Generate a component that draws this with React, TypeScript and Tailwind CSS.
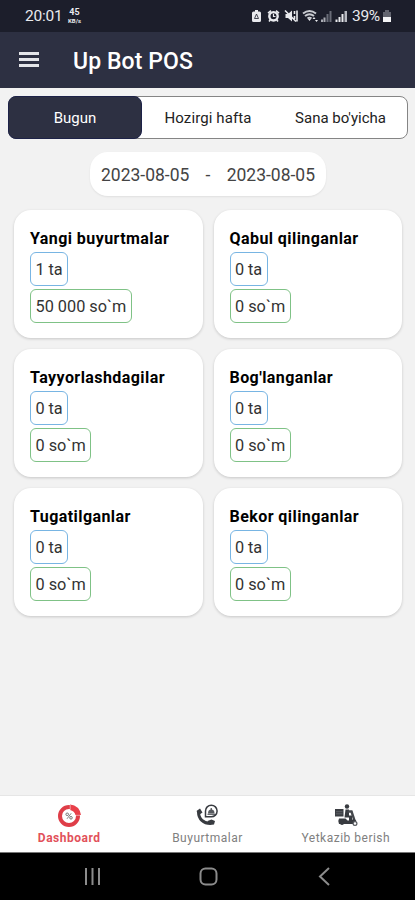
const stats = [
  { title: "Yangi buyurtmalar", count: "1 ta", sum: "50 000 so`m" },
  { title: "Qabul qilinganlar", count: "0 ta", sum: "0 so`m" },
  { title: "Tayyorlashdagilar", count: "0 ta", sum: "0 so`m" },
  { title: "Bog'langanlar", count: "0 ta", sum: "0 so`m" },
  { title: "Tugatilganlar", count: "0 ta", sum: "0 so`m" },
  { title: "Bekor qilinganlar", count: "0 ta", sum: "0 so`m" },
];

function StatusIcons() {
  return (
    <svg width="98" height="16" viewBox="0 0 98 16" fill="#e9eaee">
      {/* battery saver */}
      <path d="M4 2h3v1.5h1.5q1.5 0 1.5 1.5v7.5q0 1.500-1.500 1.500H2.500Q1 14 1 12.500V5q0-1.500 1.500-1.500H4z" />
      <path d="M3.500 10.500 5.500 6l2 4.500z" fill="none" stroke="#1c1e2b" strokeWidth=".8" />
      {/* alarm */}
      <circle cx="22.500" cy="8.300" r="4.200" fill="none" stroke="#e9eaee" strokeWidth="2.400" />
      <path d="m16.500 4.500 3-2.500 1 1.300-3 2.500zM28.500 4.500l-3-2.500-1 1.300 3 2.500zM18.500 11l1.500 1.500-1.500 1.500-1-1zM26.500 11 25 12.500l1.500 1.500 1-1z" />
      <path d="M22.500 5.800v2.700h2" fill="none" stroke="#e9eaee" strokeWidth="1.200" />
      {/* muted */}
      <path d="M34.500 6h2.500l4-3.500v11L37 10h-2.500z" />
      <path d="m34 2.500 11 11M43.500 3v3M43.500 8v3M46 2.500v11" stroke="#e9eaee" strokeWidth="1.600" fill="none" />
      {/* wifi */}
      <path d="M52 5.500q6.500-5 13 0M54 8q4.500-3.500 9 0M56.500 10.500q2-1.500 4 0" stroke="#c9cbd1" strokeWidth="2" fill="none" />
      <path d="m57 11 3 0-1.500 2zM61.500 11l1.500-2 1.500 2zM64 12h3l-1.500 2z" />
      {/* signal bars */}
      <path d="M70 11.500h2V14H70zM72.500 9.500h2V14h-2z" fill="#a9abb3" />
      <path d="M75.500 6h2v8h-2zM78.500 3h2v11h-2z" fill="#696c78" />
      <path d="M84.500 11.500h2V14h-2zM87.500 9h2v5h-2zM90.500 6h2v8h-2z" />
      <path d="M93.500 3H96v11h-2.500z" fill="#b7b9c1" />
    </svg>
  );
}

function DashboardIcon() {
  return (
    <svg width="24" height="24" viewBox="0 0 24 24" fill="none">
      <circle cx="12" cy="13" r="9" stroke="#df3e48" strokeWidth="4" />
      <path d="M13 1.500q9.500 1 11 10.500h-5.500q-1-4-5.500-5z" fill="#e9404a" />
      <path d="M13.200 2v5.500M18 12.300h5.500" stroke="#fff" strokeWidth=".5" />
      <circle cx="10.200" cy="11.300" r="1.300" stroke="#777" />
      <circle cx="14" cy="14.800" r="1.300" stroke="#777" />
      <path d="m14.200 10.300-4.200 5.500" stroke="#777" strokeWidth=".9" />
    </svg>
  );
}

function OrdersIcon() {
  return (
    <svg width="24" height="24" viewBox="0 0 24 24" fill="none">
      <path d="M3.500 9c0 7 5 11.500 12 11.500" stroke="#383b40" strokeWidth="3" />
      <path d="m1.500 8 3.500-2.500 2.500 4-3.500 2.500zM12.500 18l4-1.500 3.500 1.500-1 3.500-4 .500z" fill="#383b40" />
      <path d="M10.500 13.500V8a5.800 5.800 0 1 1 5.800 5.800H10.500z" stroke="#383b40" strokeWidth="1.500" />
      <path d="M13 10.500q0-4 3.300-4t3.200 4z" fill="#55585d" />
      <path d="M12.500 11.300h7.500M16.200 5v2" stroke="#383b40" strokeWidth="1.100" />
    </svg>
  );
}

function DeliveryIcon() {
  return (
    <svg width="24" height="24" viewBox="0 0 24 24" fill="none">
      <path d="M1 6h8.500v7.500H1z" fill="#3b3e43" />
      <path d="M2 8.700h6.500M2 10.800h6.500" stroke="#74777c" strokeWidth=".6" />
      <circle cx="13" cy="3.500" r="2.200" fill="#383b40" />
      <path d="M11.500 6.500h3.500v6h3v6h-3v-4H10.500z" fill="#383b40" />
      <path d="M13.500 8.500h5M17.500 8.500l3.300 10" stroke="#45484d" strokeWidth="2.400" />
      <path d="M5 15.500h6.500l2 2h4l2-2 3 2.500-2.500 3H5q-1.500-3 0-5.500z" fill="#383b40" />
      <circle cx="8" cy="20" r="2" fill="#383b40" />
      <circle cx="21" cy="20.500" r="1.900" fill="#fff" stroke="#55585d" strokeWidth="1.200" />
    </svg>
  );
}

export default function App() {
  return (
    <div className="flex h-[900px] w-[415px] flex-col overflow-hidden bg-[#f2f2f2] font-['Roboto',sans-serif] whitespace-nowrap text-[#222]">
      <div className="flex h-8 shrink-0 items-center bg-[#1c1e2b] pl-[25px] text-[#e9eaee]">
        <span className="w-[42px] pt-[2px] text-[15.500px] tracking-[-0.2px]">20:01</span>
        <span className="flex w-[15px] flex-col items-center text-[9px] leading-[9px] font-bold">
          <span>45</span>
          <span className="text-[6px] leading-[7px]">KB/s</span>
        </span>
        <div className="ml-[169px] w-[101px]">
          <StatusIcons />
        </div>
        <span className="w-[30px] pt-[2px] text-[15.500px] tracking-[-0.3px]">39%</span>
        <svg width="10" height="14" viewBox="0 0 10 14">
          <path d="M3 1h4v2h2v5H1V3h2z" fill="#62646f" />
          <path d="M1 8h8v5H1z" fill="#f4f4f6" />
        </svg>
      </div>

      <header className="flex h-14 shrink-0 items-center bg-[#2d3042] pl-[19px]">
        <div className="flex w-[20px] flex-col gap-[3px] pb-[2px]">
          <span className="h-[3px] bg-[#e4e5e9]" />
          <span className="h-[3px] bg-[#e4e5e9]" />
          <span className="h-[3px] bg-[#e4e5e9]" />
        </div>
        <h1 className="ml-[34px] pt-[4px] text-[23px] font-medium tracking-[0.1px] text-white">Up Bot POS</h1>
      </header>

      <main className="flex flex-1 flex-col pt-2">
        <div className="ml-[8px] flex h-[43px] w-[400px] rounded-[8px] border border-[#858585] bg-white text-[15px]">
          <div className="-my-px -ml-px flex w-[134px] items-center justify-center rounded-[8px] border border-[#1d2248] bg-[#2d3042] pt-px text-white">
            Bugun
          </div>
          <div className="flex w-[132px] items-center justify-center pt-[2px] tracking-[0.1px]">Hozirgi hafta</div>
          <div className="flex w-[133px] items-center justify-center pt-[2px]">Sana bo'yicha</div>
        </div>

        <div className="mt-[13px] ml-[90px] flex h-[44px] w-[236px] items-center justify-between rounded-[18px] bg-white px-[11px] pt-[2px] text-[17.500px] text-[#444] shadow-[0_1px_2px_rgba(0,0,0,0.08)]">
          <span>2023-08-05</span>
          <span>-</span>
          <span>2023-08-05</span>
        </div>

        <div className="mt-[14px] ml-[14px] grid w-[388px] grid-cols-2 gap-x-[11px] gap-y-[11.500px]">
          {stats.map((s) => (
            <section
              key={s.title}
              className="flex h-[127.500px] flex-col items-start rounded-[17px] bg-white pt-[17px] pl-[16px] shadow-[0_1px_3px_rgba(0,0,0,0.18)]"
            >
              <h2 className="text-[16px] leading-[24px] font-bold tracking-[0.430px] text-black">{s.title}</h2>
              <span className="mt-px flex h-[34px] items-center rounded-[6px] border border-[#78b5e3] px-[4.500px] pt-[3px] text-[16.300px] tracking-[-0.050px] text-[#333]">
                {s.count}
              </span>
              <span className="mt-[3px] flex h-[34px] items-center rounded-[6px] border border-[#7fc286] px-[4.500px] pt-[3px] text-[16.300px] text-[#333]">
                {s.sum}
              </span>
            </section>
          ))}
        </div>
      </main>

      <nav className="grid h-[57px] shrink-0 grid-cols-3 border-t border-[#e6e6e6] bg-white text-[12px] text-[#808080]">
        <div className="flex flex-col items-center pt-[7px] font-bold text-[#e2515a]">
          <DashboardIcon />
          <span className="mt-[2px] leading-[18px] tracking-[0.5px]">Dashboard</span>
        </div>
        <div className="flex flex-col items-center pt-[7px]">
          <OrdersIcon />
          <span className="mt-[2px] leading-[18px] tracking-[0.5px]">Buyurtmalar</span>
        </div>
        <div className="flex flex-col items-center pt-[7px]">
          <DeliveryIcon />
          <span className="mt-[2px] leading-[18px] tracking-[0.5px]">Yetkazib berish</span>
        </div>
      </nav>

      <div className="flex h-12 shrink-0 items-center border-t border-[#777] bg-black pl-[84px]">
        <svg width="250" height="22" viewBox="0 0 250 22" fill="none" stroke="#8c8c8c" strokeWidth="2">
          <path d="M2 2v17M8.500 2v17M15 2v17" />
          <rect x="116.500" y="2.500" width="16" height="16" rx="5" />
          <path d="m245 2-9 8.500 9 8.500" />
        </svg>
      </div>
    </div>
  );
}
